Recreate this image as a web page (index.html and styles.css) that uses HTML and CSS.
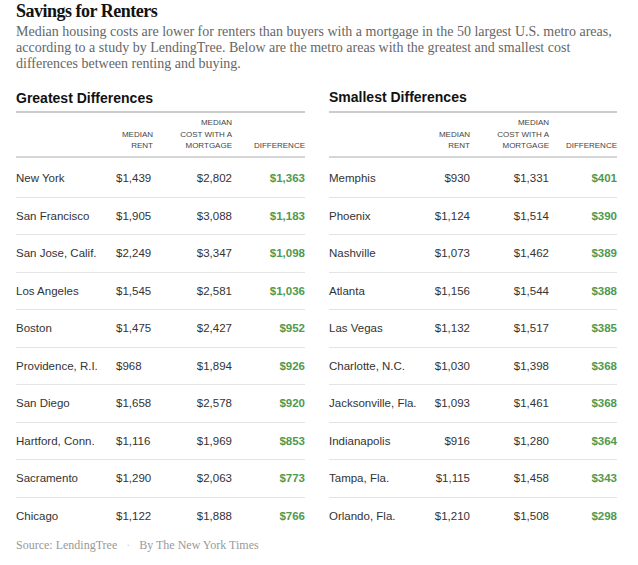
FILE: index.html
```html
<!DOCTYPE html>
<html lang="en">
<head>
<meta charset="utf-8">
<title>Savings for Renters</title>
<link rel="stylesheet" href="styles.css">
</head>
<body>
<div class="page">
  <h1 class="title">Savings for Renters</h1>
  <p class="lede">Median housing costs are lower for renters than buyers with a mortgage in the 50 largest U.S. metro areas,<br>according to a study by LendingTree. Below are the metro areas with the greatest and smallest cost<br>differences between renting and buying.</p>

  <div class="tables">
    <section class="tbl tbl-left">
      <h2 class="tbl-title">Greatest Differences</h2>
      <div class="row head">
        <div></div>
        <div class="h">Median<br>rent</div>
        <div class="h">Median<br>cost with a<br>mortgage</div>
        <div class="h">Difference</div>
      </div>
      <div class="body">
        <div class="row"><div>New York</div><div class="v">$1,439</div><div class="v">$2,802</div><div class="d">$1,363</div></div>
        <div class="row"><div>San Francisco</div><div class="v">$1,905</div><div class="v">$3,088</div><div class="d">$1,183</div></div>
        <div class="row"><div>San Jose, Calif.</div><div class="v">$2,249</div><div class="v">$3,347</div><div class="d">$1,098</div></div>
        <div class="row"><div>Los Angeles</div><div class="v">$1,545</div><div class="v">$2,581</div><div class="d">$1,036</div></div>
        <div class="row"><div>Boston</div><div class="v">$1,475</div><div class="v">$2,427</div><div class="d">$952</div></div>
        <div class="row"><div>Providence, R.I.</div><div class="v">$968</div><div class="v">$1,894</div><div class="d">$926</div></div>
        <div class="row"><div>San Diego</div><div class="v">$1,658</div><div class="v">$2,578</div><div class="d">$920</div></div>
        <div class="row"><div>Hartford, Conn.</div><div class="v">$1,116</div><div class="v">$1,969</div><div class="d">$853</div></div>
        <div class="row"><div>Sacramento</div><div class="v">$1,290</div><div class="v">$2,063</div><div class="d">$773</div></div>
        <div class="row"><div>Chicago</div><div class="v">$1,122</div><div class="v">$1,888</div><div class="d">$766</div></div>
      </div>
    </section>

    <section class="tbl tbl-right">
      <h2 class="tbl-title">Smallest Differences</h2>
      <div class="row head">
        <div></div>
        <div class="h">Median<br>rent</div>
        <div class="h">Median<br>cost with a<br>mortgage</div>
        <div class="h">Difference</div>
      </div>
      <div class="body">
        <div class="row"><div>Memphis</div><div class="v">$930</div><div class="v">$1,331</div><div class="d">$401</div></div>
        <div class="row"><div>Phoenix</div><div class="v">$1,124</div><div class="v">$1,514</div><div class="d">$390</div></div>
        <div class="row"><div>Nashville</div><div class="v">$1,073</div><div class="v">$1,462</div><div class="d">$389</div></div>
        <div class="row"><div>Atlanta</div><div class="v">$1,156</div><div class="v">$1,544</div><div class="d">$388</div></div>
        <div class="row"><div>Las Vegas</div><div class="v">$1,132</div><div class="v">$1,517</div><div class="d">$385</div></div>
        <div class="row"><div>Charlotte, N.C.</div><div class="v">$1,030</div><div class="v">$1,398</div><div class="d">$368</div></div>
        <div class="row"><div>Jacksonville, Fla.</div><div class="v">$1,093</div><div class="v">$1,461</div><div class="d">$368</div></div>
        <div class="row"><div>Indianapolis</div><div class="v">$916</div><div class="v">$1,280</div><div class="d">$364</div></div>
        <div class="row"><div>Tampa, Fla.</div><div class="v">$1,115</div><div class="v">$1,458</div><div class="d">$343</div></div>
        <div class="row"><div>Orlando, Fla.</div><div class="v">$1,210</div><div class="v">$1,508</div><div class="d">$298</div></div>
      </div>
    </section>
  </div>

  <p class="source">Source: LendingTree <span class="dot">·</span> By The New York Times</p>
</div>
</body>
</html>
```

FILE: styles.css
```css
html, body {
  margin: 0;
  padding: 0;
  background: #ffffff;
}

.page {
  padding: 0 16px;
  width: 606px;
}

.title {
  margin: 0;
  font-family: "Liberation Serif", "Times New Roman", serif;
  font-weight: bold;
  font-size: 18px;
  line-height: 22px;
  letter-spacing: -0.5px;
  color: #121212;
}

.lede {
  margin: 2px 0 0;
  font-family: "Liberation Serif", "Times New Roman", serif;
  font-size: 14px;
  line-height: 16px;
  color: #666666;
  white-space: nowrap;
}

.tables {
  display: flex;
  gap: 24px;
  margin-top: 17px;
}

.tbl-left { width: 289px; }
.tbl-right { width: 288px; }

.tbl-title {
  margin: 0;
  font-family: "Liberation Sans", Arial, sans-serif;
  font-weight: bold;
  font-size: 14px;
  line-height: 18px;
  color: #121212;
  padding-bottom: 4px;
  border-bottom: 2px solid #cccccc;
}

.tbl-right .tbl-title {
  line-height: 16px;
  padding-bottom: 6px;
}

.row {
  display: grid;
  align-items: center;
  font-family: "Liberation Sans", Arial, sans-serif;
  font-size: 11.5px;
  color: #333333;
}

.tbl-left .row { grid-template-columns: 100px 37px 79px 73px; }
.tbl-right .row { grid-template-columns: 104px 37px 79px 68px; }

.row.head {
  align-items: end;
  padding: 4px 0 4.5px;
  border-bottom: 2px solid #d6d6d6;
}

.h {
  font-size: 8px;
  line-height: 11.5px;
  text-transform: uppercase;
  color: #444444;
  text-align: right;
  white-space: nowrap;
}

.body {
  padding-top: 2px;
}

.body .row {
  height: 37.5px;
  box-sizing: border-box;
  border-bottom: 1px solid #e4e4e4;
  white-space: nowrap;
}

.body .row:last-child {
  border-bottom: none;
}

.v { text-align: right; }
.tbl-left .body .row > div:nth-child(2) { text-align: left; }

.d {
  text-align: right;
  font-weight: bold;
  color: #4f9a4f;
}

.source {
  margin: 3px 0 0;
  font-family: "Liberation Serif", "Times New Roman", serif;
  font-size: 12px;
  line-height: 14px;
  color: #999999;
}

.source .dot {
  color: #cccccc;
  padding: 0 6px;
}
```
